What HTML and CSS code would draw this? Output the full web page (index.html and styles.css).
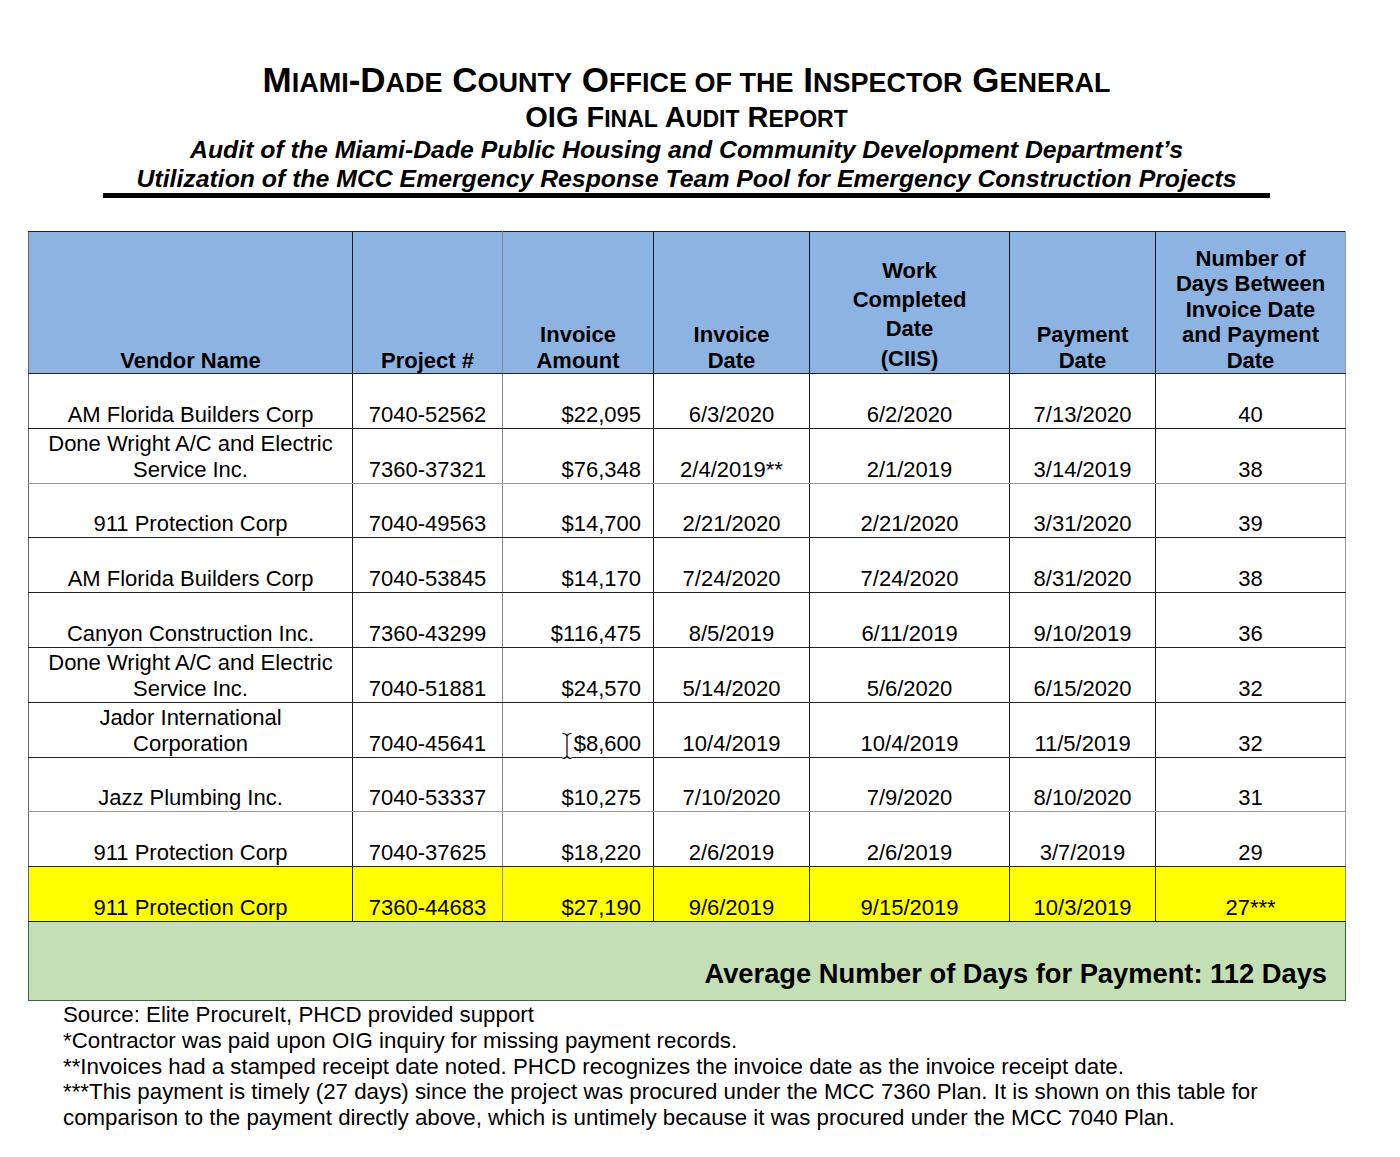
FILE: index.html
```html
<!DOCTYPE html>
<html lang="en">
<head>
<meta charset="utf-8">
<title>OIG Final Audit Report</title>
<link rel="stylesheet" href="styles.css">
</head>
<body>
<div class="page">
  <header class="title">
    <h1 class="t1">M<span class="sc">iami</span>-D<span class="sc">ade</span> C<span class="sc">ounty</span> O<span class="sc">ffice of the</span> I<span class="sc">nspector</span> G<span class="sc">eneral</span></h1>
    <h2 class="t2">OIG F<span class="sc">inal</span> A<span class="sc">udit</span> R<span class="sc">eport</span></h2>
    <p class="t3">Audit of the Miami-Dade Public Housing and Community Development Department’s</p>
    <p class="t3">Utilization of the MCC Emergency Response Team Pool for Emergency Construction Projects</p>
    <div class="rule"></div>
  </header>

  <table class="grid">
    <colgroup>
      <col class="c1"><col class="c2"><col class="c3"><col class="c4"><col class="c5"><col class="c6"><col class="c7">
    </colgroup>
    <thead>
      <tr>
        <th class="bd">Vendor Name</th>
        <th class="bg">Project #</th>
        <th class="bd">Invoice<br>Amount</th>
        <th class="bd">Invoice<br>Date</th>
        <th class="bd tall">Work<br>Completed<br>Date<br>(CIIS)</th>
        <th class="bd">Payment<br>Date</th>
        <th class="last">Number of<br>Days Between<br>Invoice Date<br>and Payment<br>Date</th>
      </tr>
    </thead>
    <tbody>
      <tr>
        <td class="bd">AM Florida Builders Corp</td><td class="bg">7040-52562</td><td class="bd num">$22,095</td><td class="bd">6/3/2020</td><td class="bd">6/2/2020</td><td class="bd">7/13/2020</td><td class="last">40</td>
      </tr>
      <tr class="lg">
        <td class="bd">Done Wright A/C and Electric<br>Service Inc.</td><td class="bg">7360-37321</td><td class="bd num">$76,348</td><td class="bd">2/4/2019**</td><td class="bd">2/1/2019</td><td class="bd">3/14/2019</td><td class="last">38</td>
      </tr>
      <tr>
        <td class="bd">911 Protection Corp</td><td class="bg">7040-49563</td><td class="bd num">$14,700</td><td class="bd">2/21/2020</td><td class="bd">2/21/2020</td><td class="bd">3/31/2020</td><td class="last">39</td>
      </tr>
      <tr>
        <td class="bd">AM Florida Builders Corp</td><td class="bg">7040-53845</td><td class="bd num">$14,170</td><td class="bd">7/24/2020</td><td class="bd">7/24/2020</td><td class="bd">8/31/2020</td><td class="last">38</td>
      </tr>
      <tr>
        <td class="bd">Canyon Construction Inc.</td><td class="bg">7360-43299</td><td class="bd num">$116,475</td><td class="bd">8/5/2019</td><td class="bd">6/11/2019</td><td class="bd">9/10/2019</td><td class="last">36</td>
      </tr>
      <tr>
        <td class="bd">Done Wright A/C and Electric<br>Service Inc.</td><td class="bg">7040-51881</td><td class="bd num">$24,570</td><td class="bd">5/14/2020</td><td class="bd">5/6/2020</td><td class="bd">6/15/2020</td><td class="last">32</td>
      </tr>
      <tr>
        <td class="bd">Jador International<br>Corporation</td><td class="bg">7040-45641</td><td class="bd num cur"><span class="ibeam"><svg width="12" height="28" viewBox="0 0 12 28"><path d="M1.5 1.5 Q5 1.5 6 4 Q7 1.5 10.5 1.5 M6 4 V24 M1.5 26.5 Q5 26.5 6 24 Q7 26.5 10.5 26.5" fill="none" stroke="#fff" stroke-width="3"/><path d="M1.5 1.5 Q5 1.5 6 4 Q7 1.5 10.5 1.5 M6 4 V24 M1.5 26.5 Q5 26.5 6 24 Q7 26.5 10.5 26.5" fill="none" stroke="#000" stroke-width="1.2"/></svg></span>$8,600</td><td class="bd">10/4/2019</td><td class="bd">10/4/2019</td><td class="bd">11/5/2019</td><td class="last">32</td>
      </tr>
      <tr class="lg">
        <td class="bd">Jazz Plumbing Inc.</td><td class="bg">7040-53337</td><td class="bd num">$10,275</td><td class="bd">7/10/2020</td><td class="bd">7/9/2020</td><td class="bd">8/10/2020</td><td class="last">31</td>
      </tr>
      <tr>
        <td class="bd">911 Protection Corp</td><td class="bg">7040-37625</td><td class="bd num">$18,220</td><td class="bd">2/6/2019</td><td class="bd">2/6/2019</td><td class="bd">3/7/2019</td><td class="last">29</td>
      </tr>
      <tr class="hl">
        <td class="bd">911 Protection Corp</td><td class="bg">7360-44683</td><td class="bd num">$27,190</td><td class="bd">9/6/2019</td><td class="bd">9/15/2019</td><td class="bd">10/3/2019</td><td class="last">27***</td>
      </tr>
    </tbody>
    <tfoot>
      <tr>
        <td colspan="7" class="avg">Average Number of Days for Payment: 112 Days</td>
      </tr>
    </tfoot>
  </table>

  <div class="notes">
    <p>Source: Elite ProcureIt, PHCD provided support</p>
    <p>*Contractor was paid upon OIG inquiry for missing payment records.</p>
    <p>**Invoices had a stamped receipt date noted. PHCD recognizes the invoice date as the invoice receipt date.</p>
    <p>***This payment is timely (27 days) since the project was procured under the MCC 7360 Plan. It is shown on this table for comparison to the payment directly above, which is untimely because it was procured under the MCC 7040 Plan.</p>
  </div>
</div>
</body>
</html>
```

FILE: styles.css
```css
html, body {
  margin: 0;
  padding: 0;
  background: #ffffff;
}

body {
  font-family: "Liberation Sans", Arial, sans-serif;
  color: #000;
}

.page {
  width: 1317px;
  margin-left: 28px;
  padding-top: 61px;
}

.title {
  display: flex;
  flex-direction: column;
  align-items: center;
}

.sc {
  text-transform: uppercase;
}

.t1 {
  margin: 0;
  font-size: 35px;
  line-height: 38px;
  font-weight: bold;
}

.t1 .sc {
  font-size: 27px;
}

.t2 {
  margin: 0;
  font-size: 29px;
  line-height: 31px;
  font-weight: bold;
}

.t2 .sc {
  font-size: 23px;
}

.t3 {
  margin: 0;
  font-size: 24.8px;
  line-height: 29px;
  font-weight: bold;
  font-style: italic;
}

.rule {
  width: 1167px;
  height: 5px;
  background: #000;
  margin-top: 0;
}

.grid {
  margin-top: 33px;
  border-collapse: collapse;
  table-layout: fixed;
  width: 1317px;
}

.c1 { width: 324px; }
.c2 { width: 150px; }
.c3 { width: 151px; }
.c4 { width: 156px; }
.c5 { width: 200px; }
.c6 { width: 146px; }
.c7 { width: 190px; }

.grid th,
.grid td {
  padding: 0 4px 1px;
  vertical-align: bottom;
  text-align: center;
  border-top: 1px solid #222;
  border-bottom: 1px solid #222;
}

.grid th {
  background: #8db3e2;
  font-size: 22px;
  line-height: 25.5px;
  font-weight: bold;
  height: 141px;
  padding-bottom: 0;
}

.grid th.tall {
  line-height: 29.3px;
}

.grid td {
  font-size: 22px;
  line-height: 26px;
  height: 53.8px;
  padding-bottom: 0;
}

.bd { border-right: 1px solid #1a1a1a; }
.bg { border-right: 1px solid #8a8a8a; }
.grid .bd:first-child { border-left: 1px solid #666; }
.last { border-right: 1px solid #999; }

.grid tr.lg td { border-bottom-color: #9a9a9a; }

.grid td.num {
  text-align: right;
  padding-right: 12px;
}

.grid td.cur {
  position: relative;
}

.ibeam {
  position: absolute;
  left: 58px;
  top: 29px;
  width: 12px;
  height: 28px;
}

.grid tr.hl td {
  background: #ffff00;
}

.grid td.avg {
  background: #c4dfb4;
  height: 68px;
  text-align: right;
  font-size: 27.3px;
  line-height: 32px;
  font-weight: bold;
  padding: 0 18px 10px 0;
  border: 1px solid #3a6a3a;
  vertical-align: bottom;
}

.notes {
  padding-left: 35px;
  padding-top: 1px;
  font-size: 22.3px;
  line-height: 25.8px;
}

.notes p {
  margin: 0;
  width: 1220px;
}
```
